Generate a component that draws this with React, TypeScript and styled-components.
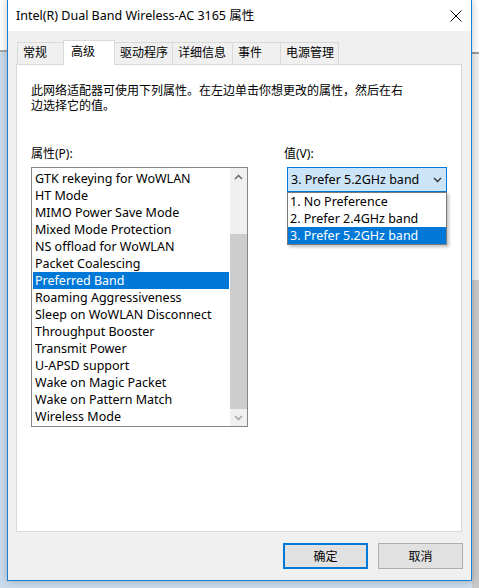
import styled, { createGlobalStyle } from "styled-components";

const GlobalStyle = createGlobalStyle`
  html, body {
    margin: 0;
    padding: 0;
    width: 479px;
    height: 588px;
    overflow: hidden;
  }
  body {
    font-family: "Segoe UI", "Noto Sans", "Noto Sans CJK SC", sans-serif;
    font-size: 12px;
    color: #000;
  }
`;

const Desktop = styled.div`
  width: 479px;
  height: 588px;
  box-sizing: border-box;
  padding: 0 7px 7px 7px;
  background:
    linear-gradient(to bottom, #fff 0 50px, #a9a9a9 50px 52px, transparent 52px) left top / 7px 100% no-repeat,
    linear-gradient(to bottom, #fff 0 52px, #9a9a9a 52px 54px, #f0f0f0 54px 280px, #c9c9c9 280px) right top / 7px 100% no-repeat,
    #cbdcec;
`;

const Window = styled.div`
  width: 465px;
  height: 581px;
  box-sizing: border-box;
  border: 1px solid #1a7ed2;
  border-top: none;
  background: #f0f0f0;
  display: flex;
  flex-direction: column;
  box-shadow: 0 0 8px rgba(0, 0, 0, 0.25);
`;

const TitleBar = styled.div`
  height: 31px;
  flex-shrink: 0;
  background: #fff;
  display: flex;
  align-items: center;
  justify-content: space-between;
  padding-left: 8px;
`;

const Title = styled.span`
  font-size: 12.5px;
  line-height: 16px;
`;

const CloseBox = styled.div`
  width: 31px;
  height: 31px;
  display: flex;
  align-items: center;
  justify-content: center;
`;

const Body = styled.div`
  padding: 9px 9px 0 8px;
`;

const TabRow = styled.div`
  display: flex;
  align-items: flex-end;
  height: 24px;
  padding-left: 1px;
`;

const Tab = styled.div<{ $w: number; $active?: boolean }>`
  box-sizing: border-box;
  width: ${(p) => p.$w + 1}px;
  height: ${(p) => (p.$active ? 25 : 22)}px;
  margin-left: -1px;
  margin-bottom: ${(p) => (p.$active ? -1 : 0)}px;
  border: 1px solid #d9d9d9;
  border-bottom: none;
  background: ${(p) => (p.$active ? "#fff" : "#f0f0f0")};
  padding-left: ${(p) => (p.$active ? 7 : 5)}px;
  padding-top: ${(p) => (p.$active ? 3 : 2)}px;
  line-height: 16px;
  white-space: nowrap;
  position: relative;
  z-index: ${(p) => (p.$active ? 1 : 0)};
  &:first-child {
    margin-left: 0;
  }
`;

const Panel = styled.div`
  box-sizing: border-box;
  height: 468px;
  border: 1px solid #d9d9d9;
  background: #fff;
  padding: 18px 14px 0 14px;
`;

const Description = styled.p`
  margin: 0;
  width: 378px;
  line-height: 15px;
`;

const Columns = styled.div`
  display: flex;
  gap: 36px;
  margin-top: 33px;
`;

const Column = styled.div<{ $w: number }>`
  width: ${(p) => p.$w}px;
  flex-shrink: 0;
  display: flex;
  flex-direction: column;
`;

const Label = styled.div`
  line-height: 15px;
  height: 15px;
  margin-bottom: 6px;
`;

const ListBox = styled.div`
  box-sizing: border-box;
  height: 260px;
  border: 1px solid #828790;
  display: flex;
  background: #fff;
`;

const ListItems = styled.div`
  flex: 1;
  padding: 2px 1px 1px 1px;
  overflow: hidden;
`;

const ListItem = styled.div<{ $selected?: boolean }>`
  height: 17px;
  line-height: 17px;
  font-size: 12.5px;
  padding-left: 2px;
  white-space: nowrap;
  background: ${(p) => (p.$selected ? "#0078d7" : "transparent")};
  color: ${(p) => (p.$selected ? "#fff" : "#000")};
`;

const ScrollBar = styled.div`
  width: 17px;
  background: #f0f0f0;
  display: flex;
  flex-direction: column;
`;

const ScrollArrow = styled.div`
  height: 17px;
  display: flex;
  align-items: center;
  justify-content: center;
  flex-shrink: 0;
`;

const ScrollTrack = styled.div`
  flex: 1;
  display: flex;
  flex-direction: column;
  justify-content: flex-end;
`;

const ScrollThumb = styled.div`
  height: 175px;
  background: #cdcdcd;
`;

const SelectWrap = styled.div`
  position: relative;
  margin-left: 3px;
  width: 160px;
`;

const Select = styled.div`
  box-sizing: border-box;
  height: 25px;
  border: 1px solid #0078d7;
  background: #cce4f7;
  display: flex;
  align-items: center;
  justify-content: space-between;
  padding: 0 4px 0 3px;
  font-size: 12.5px;
`;

const DropList = styled.div`
  position: absolute;
  top: 100%;
  left: 0;
  width: 160px;
  box-sizing: border-box;
  border: 1px solid #7a7a7a;
  background: #fff;
  box-shadow: 2px 2px 3px rgba(0, 0, 0, 0.25);
  z-index: 2;
`;

const DropItem = styled.div<{ $selected?: boolean }>`
  height: 17px;
  line-height: 17px;
  font-size: 12.5px;
  padding-left: 2px;
  background: ${(p) => (p.$selected ? "#0078d7" : "transparent")};
  color: ${(p) => (p.$selected ? "#fff" : "#000")};
`;

const Footer = styled.div`
  display: flex;
  justify-content: flex-end;
  gap: 10px;
  padding: 11px 8px 0 0;
`;

const Button = styled.div<{ $default?: boolean }>`
  box-sizing: border-box;
  width: 85px;
  height: 26px;
  background: #e1e1e1;
  border: ${(p) => (p.$default ? "2px solid #0078d7" : "1px solid #adadad")};
  display: flex;
  align-items: center;
  justify-content: center;
`;

const tabs = [
  { label: "常规", w: 46 },
  { label: "高级", w: 51, active: true },
  { label: "驱动程序", w: 58 },
  { label: "详细信息", w: 60 },
  { label: "事件", w: 48 },
  { label: "电源管理", w: 58 },
];

const properties = [
  "GTK rekeying for WoWLAN",
  "HT Mode",
  "MIMO Power Save Mode",
  "Mixed Mode Protection",
  "NS offload for WoWLAN",
  "Packet Coalescing",
  "Preferred Band",
  "Roaming Aggressiveness",
  "Sleep on WoWLAN Disconnect",
  "Throughput Booster",
  "Transmit Power",
  "U-APSD support",
  "Wake on Magic Packet",
  "Wake on Pattern Match",
  "Wireless Mode",
];

const options = [
  "1. No Preference",
  "2. Prefer 2.4GHz band",
  "3. Prefer 5.2GHz band",
];

function Chevron({ up, color = "#606060" }: { up?: boolean; color?: string }) {
  return (
    <svg width="9" height="6" viewBox="0 0 9 6">
      <polyline
        points={up ? "1,5 4.5,1.5 8,5" : "1,1 4.5,4.5 8,1"}
        fill="none"
        stroke={color}
        strokeWidth="1.4"
      />
    </svg>
  );
}

export default function App() {
  return (
    <>
      <GlobalStyle />
      <Desktop>
        <Window>
          <TitleBar>
            <Title>Intel(R) Dual Band Wireless-AC 3165 属性</Title>
            <CloseBox>
              <svg width="12" height="12" viewBox="0 0 12 12">
                <path d="M0.5 0.5 L11.5 11.5 M11.5 0.5 L0.5 11.5" stroke="#000" strokeWidth="1" />
              </svg>
            </CloseBox>
          </TitleBar>
          <Body>
            <TabRow>
              {tabs.map((t) => (
                <Tab key={t.label} $w={t.w} $active={t.active}>
                  {t.label}
                </Tab>
              ))}
            </TabRow>
            <Panel>
              <Description>
                此网络适配器可使用下列属性。在左边单击你想更改的属性，然后在右边选择它的值。
              </Description>
              <Columns>
                <Column $w={217}>
                  <Label>属性(P):</Label>
                  <ListBox>
                    <ListItems>
                      {properties.map((p) => (
                        <ListItem key={p} $selected={p === "Preferred Band"}>
                          {p}
                        </ListItem>
                      ))}
                    </ListItems>
                    <ScrollBar>
                      <ScrollArrow>
                        <Chevron up />
                      </ScrollArrow>
                      <ScrollTrack>
                        <ScrollThumb />
                      </ScrollTrack>
                      <ScrollArrow>
                        <Chevron color="#a0a0a0" />
                      </ScrollArrow>
                    </ScrollBar>
                  </ListBox>
                </Column>
                <Column $w={163}>
                  <Label>值(V):</Label>
                  <SelectWrap>
                    <Select>
                      <span>3. Prefer 5.2GHz band</span>
                      <Chevron color="#333" />
                    </Select>
                    <DropList>
                      {options.map((o, i) => (
                        <DropItem key={o} $selected={i === 2}>
                          {o}
                        </DropItem>
                      ))}
                    </DropList>
                  </SelectWrap>
                </Column>
              </Columns>
            </Panel>
          </Body>
          <Footer>
            <Button $default>确定</Button>
            <Button>取消</Button>
          </Footer>
        </Window>
      </Desktop>
    </>
  );
}
